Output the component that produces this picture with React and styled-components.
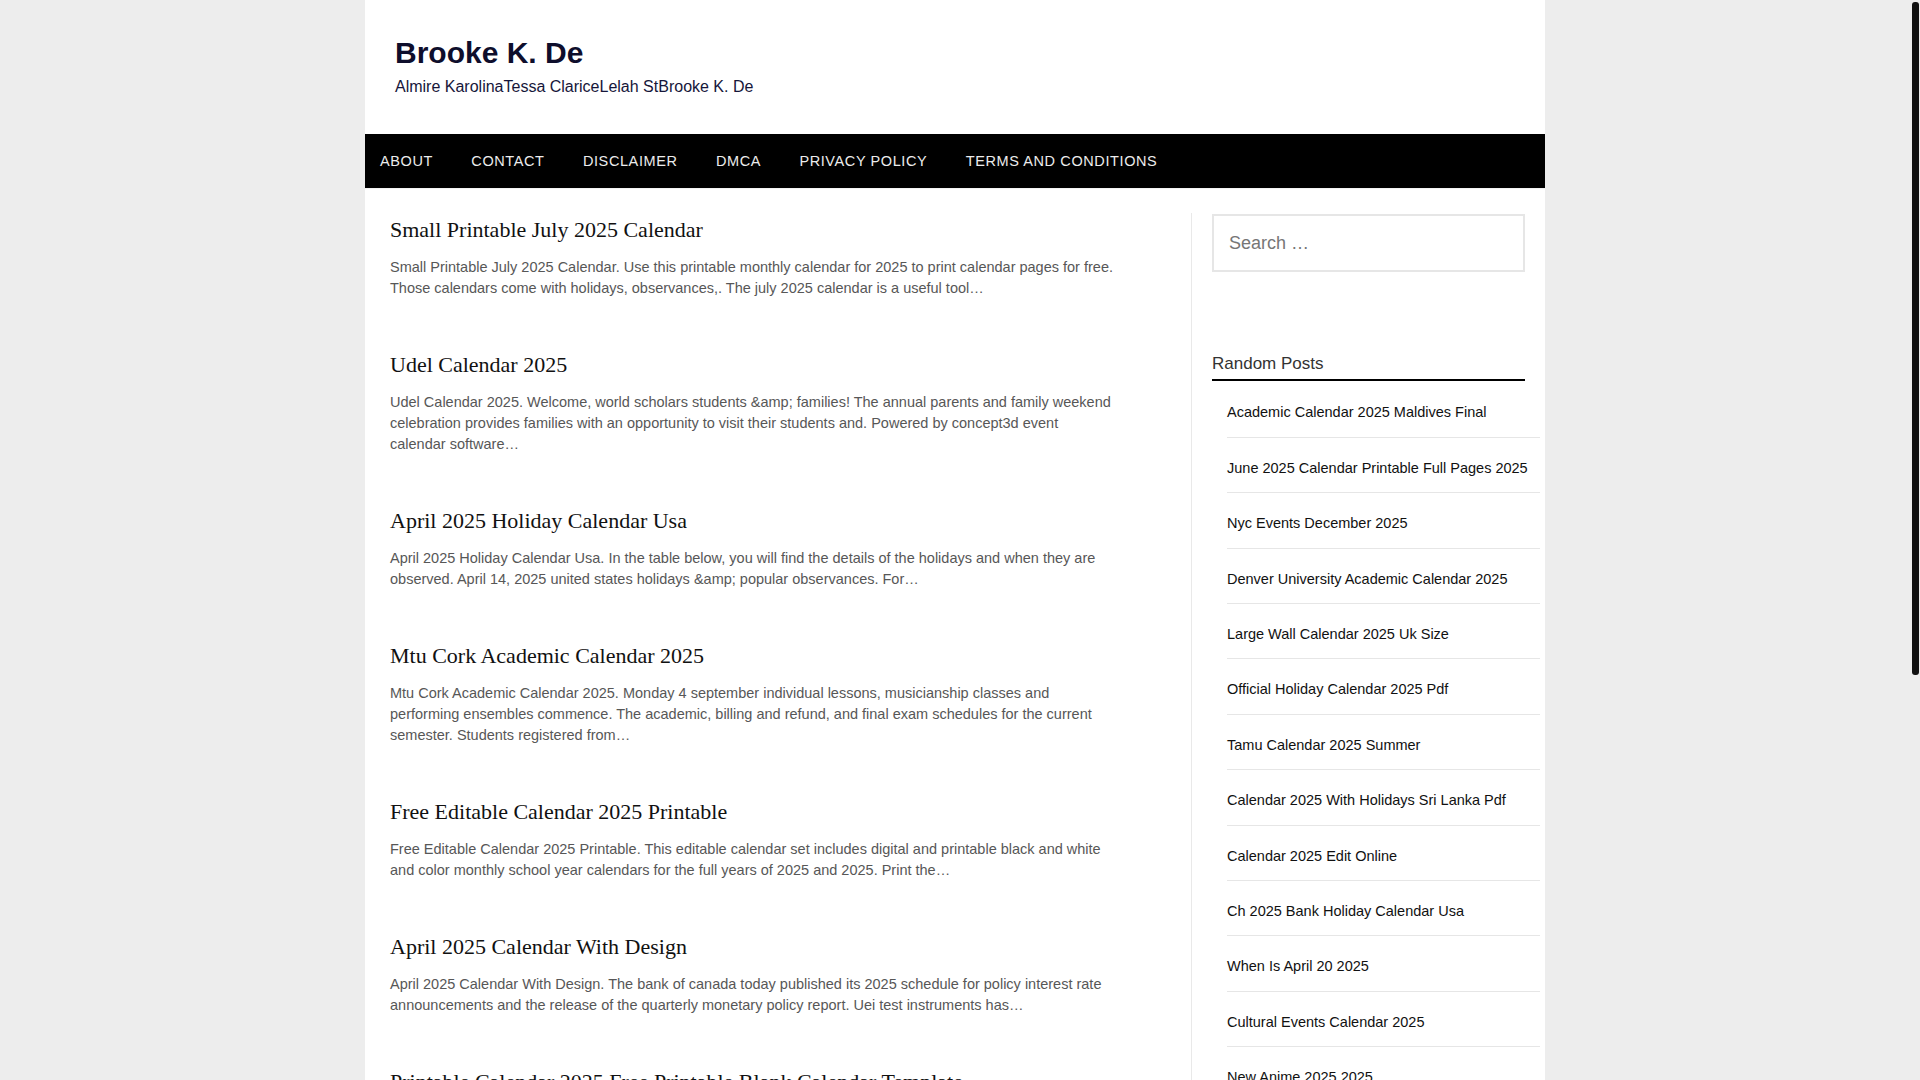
import React from "react";
import styled, { createGlobalStyle } from "styled-components";

const GlobalStyle = createGlobalStyle`
  html, body {
    margin: 0;
    padding: 0;
    background: #ededed;
    font-family: "Liberation Sans", Arial, sans-serif;
  }
  body {
    padding-right: 10px;
  }
  ::-webkit-scrollbar {
    width: 0;
  }
`;

const ScrollThumb = styled.div`
  position: fixed;
  top: 2px;
  right: 1px;
  width: 7px;
  height: 673px;
  border-radius: 3px;
  background: #111;
  z-index: 10;
`;

const Page = styled.div`
  width: 1180px;
  margin: 0 auto;
  background: #fff;
`;

const Header = styled.header`
  padding: 35px 30px 35px;
`;

const SiteTitle = styled.h1`
  margin: 0 0 4px;
  font-size: 30px;
  line-height: 36px;
  font-weight: 700;
  color: #0e0e2c;
`;

const Tagline = styled.p`
  margin: 0;
  font-size: 16px;
  line-height: 24px;
  color: #16163a;
`;

const Nav = styled.nav`
  display: flex;
  background: #000;
  height: 54px;
  align-items: center;
  border-bottom: 1px solid #f3f3f3;
`;

const NavItem = styled.a`
  padding: 0 19.2px;
  font-size: 14.5px;
  letter-spacing: 0.6px;
  color: #ececec;
  text-transform: uppercase;
  line-height: 54px;
  text-decoration: none;
  &:first-child {
    padding-left: 15px;
  }
`;

const Main = styled.div`
  display: flex;
  align-items: flex-start;
`;

const Primary = styled.main`
  box-sizing: border-box;
  width: 826px;
  padding: 28px 74px 20px 25px;
`;

const Post = styled.article`
  margin-bottom: 52.6px;
`;

const PostTitle = styled.h2`
  margin: 0 0 14px;
  font-family: "Liberation Serif", "Times New Roman", serif;
  font-weight: 400;
  font-size: 22px;
  line-height: 26.4px;
  color: #111;
`;

const Excerpt = styled.p`
  margin: 0;
  font-size: 14.5px;
  line-height: 21px;
  color: #575757;
`;

const Sidebar = styled.aside`
  box-sizing: border-box;
  width: 354px;
  margin-top: 24px;
  padding: 1px 20px 40px 20px;
  border-left: 1px solid #e9e9e9;
  min-height: 1500px;
`;

const SearchBox = styled.input`
  box-sizing: border-box;
  display: block;
  width: 100%;
  height: 58px;
  padding: 0 15px;
  border: 2px solid #e6e6e6;
  font-family: "Liberation Sans", Arial, sans-serif;
  font-size: 18px;
  color: #333;
  outline: none;
  &::placeholder {
    color: #767676;
  }
`;

const WidgetTitle = styled.h3`
  margin: 82px 0 0;
  padding-bottom: 5px;
  border-bottom: 2px solid #000;
  font-size: 17px;
  line-height: 20.4px;
  font-weight: 400;
  color: #333;
`;

const PostList = styled.ul`
  list-style: none;
  margin: 1px 0 0;
  padding: 0;
`;

const PostLink = styled.li`
  width: 100%;
  margin-left: 15px;
  padding: 20px 0 14px;
  border-bottom: 1px solid #e6e6e6;
  font-size: 14.5px;
  line-height: 20.4px;
  color: #111;
  white-space: nowrap;
`;

const Footer = styled.footer`
  background: #000;
  color: #eee;
  text-align: center;
  font-size: 14px;
  padding: 22px 0;
`;

const menu = ["About", "Contact", "Disclaimer", "DMCA", "Privacy Policy", "Terms and Conditions"];

const posts = [
  {
    title: "Small Printable July 2025 Calendar",
    text: "Small Printable July 2025 Calendar. Use this printable monthly calendar for 2025 to print calendar pages for free. Those calendars come with holidays, observances,. The july 2025 calendar is a useful tool…",
  },
  {
    title: "Udel Calendar 2025",
    text: "Udel Calendar 2025. Welcome, world scholars students &amp; families! The annual parents and family weekend celebration provides families with an opportunity to visit their students and. Powered by concept3d event calendar software…",
  },
  {
    title: "April 2025 Holiday Calendar Usa",
    text: "April 2025 Holiday Calendar Usa. In the table below, you will find the details of the holidays and when they are observed. April 14, 2025 united states holidays &amp; popular observances. For…",
  },
  {
    title: "Mtu Cork Academic Calendar 2025",
    text: "Mtu Cork Academic Calendar 2025. Monday 4 september individual lessons, musicianship classes and performing ensembles commence. The academic, billing and refund, and final exam schedules for the current semester. Students registered from…",
  },
  {
    title: "Free Editable Calendar 2025 Printable",
    text: "Free Editable Calendar 2025 Printable. This editable calendar set includes digital and printable black and white and color monthly school year calendars for the full years of 2025 and 2025. Print the…",
  },
  {
    title: "April 2025 Calendar With Design",
    text: "April 2025 Calendar With Design. The bank of canada today published its 2025 schedule for policy interest rate announcements and the release of the quarterly monetary policy report. Uei test instruments has…",
  },
  {
    title: "Printable Calendar 2025 Free Printable Blank Calendar Template",
    text: "Printable Calendar 2025 Free Printable Blank Calendar Template. Download free printable blank calendar templates for 2025 in pdf, word and excel formats. These templates are fully…",
  },
  {
    title: "Lunar Calendar 2025 Chinese",
    text: "Lunar Calendar 2025 Chinese. Find the dates of the chinese new year, the mid autumn festival and other traditional holidays. The lunar calendar for the year…",
  },
  {
    title: "School Calendar 2025 Qld",
    text: "School Calendar 2025 Qld. Queensland state school term dates and holidays for the school year. Plan ahead with the official term dates and public holidays…",
  },
];

const randomPosts = [
  "Academic Calendar 2025 Maldives Final",
  "June 2025 Calendar Printable Full Pages 2025",
  "Nyc Events December 2025",
  "Denver University Academic Calendar 2025",
  "Large Wall Calendar 2025 Uk Size",
  "Official Holiday Calendar 2025 Pdf",
  "Tamu Calendar 2025 Summer",
  "Calendar 2025 With Holidays Sri Lanka Pdf",
  "Calendar 2025 Edit Online",
  "Ch 2025 Bank Holiday Calendar Usa",
  "When Is April 20 2025",
  "Cultural Events Calendar 2025",
  "New Anime 2025 2025",
  "Blank Calendar 2025 Printable",
  "Uk Calendar 2025 With Bank Holidays",
];

export default function App() {
  return (
    <>
      <GlobalStyle />
      <ScrollThumb />
      <Page>
        <Header>
          <SiteTitle>Brooke K. De</SiteTitle>
          <Tagline>Almire KarolinaTessa ClariceLelah StBrooke K. De</Tagline>
        </Header>
        <Nav>
          {menu.map((m) => (
            <NavItem key={m} href="#">
              {m}
            </NavItem>
          ))}
        </Nav>
        <Main>
          <Primary>
            {posts.map((p) => (
              <Post key={p.title}>
                <PostTitle>{p.title}</PostTitle>
                <Excerpt>{p.text}</Excerpt>
              </Post>
            ))}
          </Primary>
          <Sidebar>
            <SearchBox placeholder="Search …" />
            <WidgetTitle>Random Posts</WidgetTitle>
            <PostList>
              {randomPosts.map((r) => (
                <PostLink key={r}>{r}</PostLink>
              ))}
            </PostList>
          </Sidebar>
        </Main>
        <Footer>Copyright © 2025 Brooke K. De</Footer>
      </Page>
    </>
  );
}
